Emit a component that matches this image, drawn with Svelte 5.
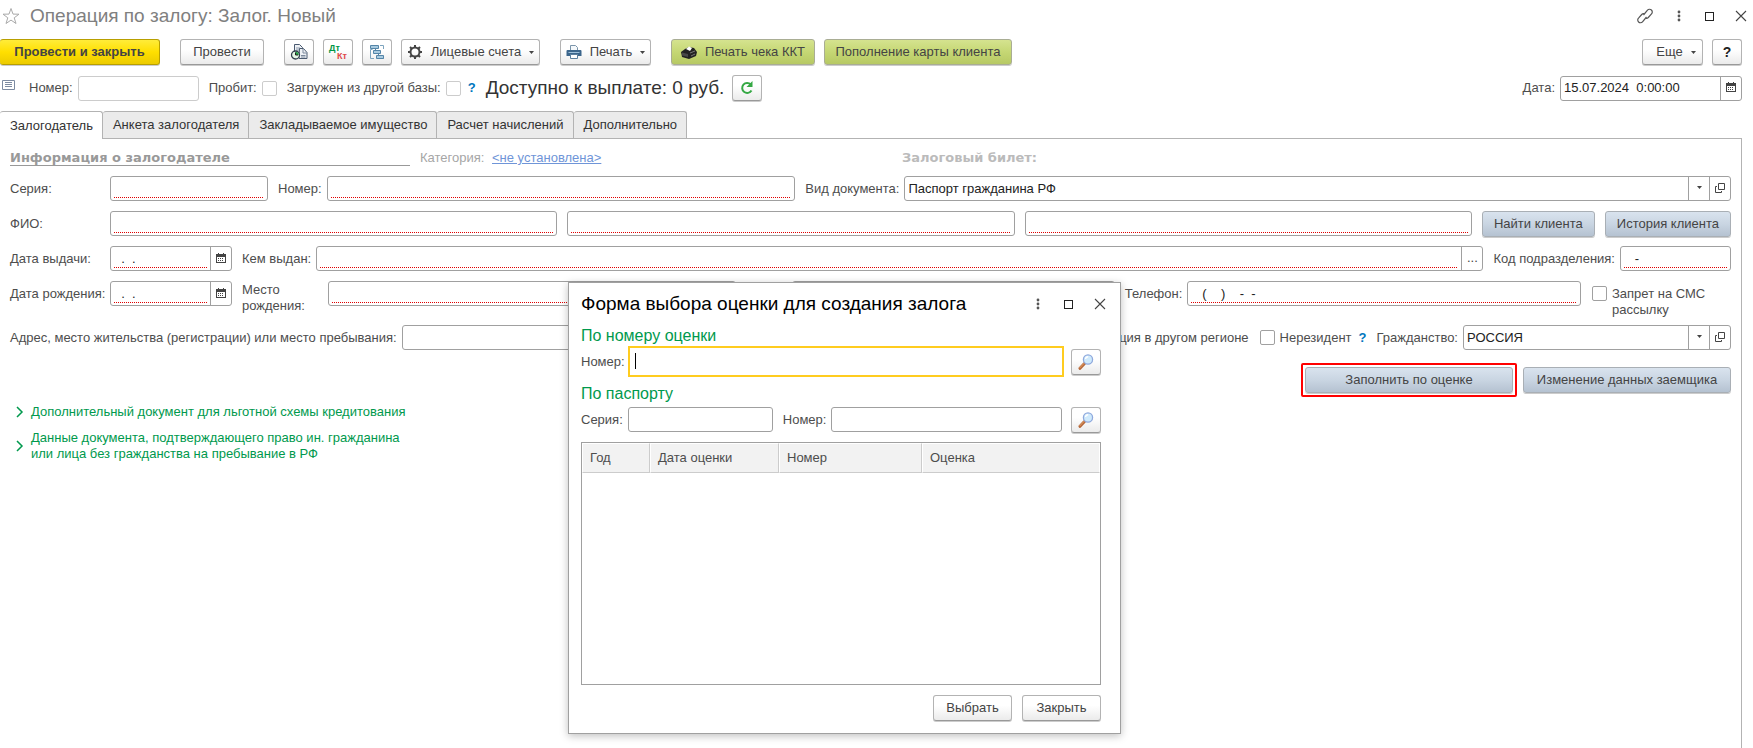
<script>
  const tabs = [
    'Залогодатель',
    'Анкета залогодателя',
    'Закладываемое имущество',
    'Расчет начислений',
    'Дополнительно'
  ];
  const columns = ['Год', 'Дата оценки', 'Номер', 'Оценка'];

  let activeTab = $state(0);
</script>

{#snippet calendar()}
  <svg width="10" height="10" viewBox="0 0 10 10" aria-hidden="true">
    <path d="M0 1h10v9H0z" fill="#444" />
    <path d="M1 4h8v5H1z" fill="#fff" />
    <path d="M2.500 0v2M7.500 0v2" stroke="#444" />
    <path d="M2 5.500h1m1 0h1m1 0h1M2 7.500h1m1 0h1m1 0h1" stroke="#444" />
  </svg>
{/snippet}

{#snippet arrow()}
  <svg class="arrow" width="5" height="3" viewBox="0 0 5 3" aria-hidden="true">
    <path d="M0 0h5L2.500 3z" fill="#444" />
  </svg>
{/snippet}

{#snippet openIcon()}
  <svg width="10" height="10" viewBox="0 0 10 10" fill="none" stroke="#444" aria-hidden="true">
    <path d="M3.500.5h6v6h-6zM2 3.500H.5v6h6V8" />
  </svg>
{/snippet}

{#snippet windowIcons(withLink)}
  {#if withLink}
    <button class="plain" aria-label="Ссылка">
      <svg width="16" height="16" viewBox="0 0 16 16" fill="none" stroke="#555" stroke-width="1.200">
        <path d="M6.500 7 10.500 2.200a2.700 2.700 0 0 1 3.900-.2 2.700 2.700 0 0 1 .1 3.900L11.300 9.500a2.700 2.700 0 0 1-2.300.8" />
        <path d="M9.500 9 5.500 13.800a2.700 2.700 0 0 1-3.900.2 2.700 2.700 0 0 1-.1-3.900L4.700 6.500A2.700 2.700 0 0 1 7 5.700" />
      </svg>
    </button>
  {/if}
  <button class="plain" aria-label="Меню">
    <svg width="12" height="12" viewBox="0 0 12 12" fill="#555">
      <circle cx="6" cy="2" r="1.400" /><circle cx="6" cy="6" r="1.400" /><circle cx="6" cy="10" r="1.400" />
    </svg>
  </button>
  <button class="plain" aria-label="Развернуть">
    <svg width="10" height="10" viewBox="0 0 10 10" fill="none" stroke="#222" shape-rendering="crispEdges">
      <path d="M.5 1.500h8v8h-8z" />
    </svg>
  </button>
  <button class="plain" aria-label="Закрыть окно">
    <svg width="12" height="12" viewBox="0 0 12 12" fill="none" stroke="#444" stroke-width="1.100">
      <path d="M1 1l10 10M11 1 1 11" />
    </svg>
  </button>
{/snippet}

{#snippet searchIcon()}
  <svg width="16" height="16" viewBox="0 0 16 16" aria-hidden="true">
    <path d="M2 14.300 6.500 9.500" stroke="#b5683c" stroke-width="3" stroke-linecap="round" />
    <path d="M1.800 13.800 6 9.400" stroke="#e8a568" stroke-width="1" stroke-linecap="round" />
    <circle cx="10" cy="5.500" r="4.600" fill="#cfeafc" stroke="#8fa9dd" stroke-width="1.300" />
    <path d="M7.500 5a2.700 2.700 0 0 1 2.700-2.300" fill="none" stroke="#fff" stroke-width="1.400" />
  </svg>
{/snippet}

<div class="page">
  <header class="title-bar">
    <svg width="18" height="18" viewBox="0 0 18 18" fill="none" stroke="#aaa" aria-hidden="true">
      <path d="M9 1.500l2 5.600 6 .1-4.800 3.600 1.800 5.700-5-3.400-5 3.400 1.800-5.700L1 7.200l6-.1z" />
    </svg>
    <h1>Операция по залогу: Залог. Новый</h1>
    <div class="window-icons">{@render windowIcons(true)}</div>
  </header>

  <div class="toolbar">
    <button class="btn primary">Провести и закрыть</button>
    <button class="btn post">Провести</button>
    <div class="group">
      <button class="btn icon" aria-label="Отчеты">
        <svg width="18" height="18" viewBox="0 0 18 18">
          <path d="M4.500 1.500h5l3 3v8h-8z" fill="#eef1f5" stroke="#4a5a70" />
          <path d="M6 5h4M6 7h3" stroke="#8e9bad" />
          <path d="M9.500 5.500h4l3.500 4v6H9z" fill="#eef1f5" stroke="#4a5a70" />
          <path d="M13 6v4h4M11 12.500h4.500M11 14h4.500" stroke="#7c8a9d" fill="none" />
          <circle cx="5.500" cy="12" r="4" fill="#e6f7e8" stroke="#333f4f" stroke-width="1.300" />
          <path d="M5.500 12V8.800A3.200 3.200 0 0 1 8.700 12z" fill="#27a348" />
          <path d="M5.500 9.500V12H8" stroke="#222" fill="none" />
        </svg>
      </button>
      <button class="btn icon" aria-label="Движения документа">
        <span class="dtkt"><b class="dt">Дт</b><b class="kt">Кт</b></span>
      </button>
      <button class="btn icon" aria-label="Структура подчиненности">
        <svg width="16" height="16" viewBox="0 0 16 16" fill="none" stroke="#5485a8">
          <path d="M3.500 5.500h-2v9H5M11 1.500h3.500V5M12 14.500h2.500V12" stroke="#7da4be" />
          <path d="M1.500 1.500h8v3h-8zM4.500 6.500h7v3h-7zM7.500 11.500h7v3h-7z" fill="#a9cbe0" />
          <path d="M6.500 4.500v2M9.500 9.500v2" />
        </svg>
      </button>
      <button class="btn accounts">
        <svg width="16" height="16" viewBox="0 0 16 16" fill="none" stroke="#444">
          <circle cx="8" cy="8" r="4.500" stroke-width="2" />
          <path d="M8 1v2.500M8 12.500V15M1 8h2.500M12.500 8H15M3 3l2 2M11 11l2 2M13 3l-2 2M5 11l-2 2" stroke-width="2" />
        </svg>
        Лицевые счета {@render arrow()}
      </button>
    </div>
    <button class="btn print">
      <svg width="16" height="16" viewBox="0 0 16 16">
        <path d="M4.500 6V1.500h5l2 2V6" fill="#f4f8fb" stroke="#7a94aa" />
        <path d="M1.500 6h13a1 1 0 0 1 1 1v5H.5V7a1 1 0 0 1 1-1z" fill="#3c668c" />
        <path d="M2.500 8.500h11" stroke="#9ec0da" />
        <path d="M4.500 10.500h7v4h-7z" fill="#fff" stroke="#5b7f9e" />
      </svg>
      Печать {@render arrow()}
    </button>
    <div class="group">
      <button class="btn green kkt">
        <svg width="16" height="13" viewBox="0 0 16 13">
          <path d="M0 6l4-3 4-2 5 1 3 4-1 4-7 3-7-2z" fill="#222" />
          <path d="M5 3l3-2.500L11 2 9 5z" fill="#fff" />
          <path d="M1 6.500l6 1.500v3l-6-1.500z" fill="#484848" />
          <path d="M9 7l5-2M10 10l4-2" stroke="#777" />
        </svg>
        Печать чека ККТ
      </button>
      <button class="btn green">Пополнение карты клиента</button>
    </div>
    <div class="group right">
      <button class="btn more">Еще {@render arrow()}</button>
      <button class="btn icon help">?</button>
    </div>
  </div>

  <div class="summary">
    <svg class="note" width="13" height="10" viewBox="0 0 13 10" fill="none" stroke="#7d8ba1" aria-hidden="true">
      <path d="M.5.5h12v9H.5zM3 2.500h7M3 4.500h7M3 6.500h7" />
    </svg>
    <label for="number">Номер:</label>
    <div class="box light number"><input id="number" /></div>
    <label class="next" for="probit">Пробит:</label>
    <input id="probit" class="light" type="checkbox" />
    <label class="next" for="loaded">Загружен из другой базы:</label>
    <input id="loaded" class="light" type="checkbox" />
    <a class="hint" href="#loaded">?</a>
    <span class="payout">Доступно к выплате: 0 руб.</span>
    <button class="btn icon" aria-label="Обновить">
      <svg width="14" height="14" viewBox="0 0 14 14">
        <path d="M11.500 9.500a5 5 0 1 1-.7-6" fill="none" stroke="#35a844" stroke-width="2" />
        <path d="M12.500 0v6h-6z" fill="#35a844" />
      </svg>
    </button>
    <label class="date-label" for="date">Дата:</label>
    <div class="box date">
      <input id="date" value="15.07.2024  0:00:00" />
      <button class="addon" aria-label="Выбрать дату">{@render calendar()}</button>
    </div>
  </div>

  <div class="tabs" role="tablist">
    {#each tabs as tab, i}
      <button role="tab" class:active={activeTab === i} aria-selected={activeTab === i} onclick={() => (activeTab = i)}>
        {tab}
      </button>
    {/each}
  </div>

  <main class="panel">
    <div class="row info">
      <h2>Информация о залогодателе</h2>
      <span class="category">Категория: <a href="#category">&lt;не установлена&gt;</a></span>
      <strong>Залоговый билет:</strong>
    </div>

    <div class="row">
      <label class="first" for="series">Серия:</label>
      <div class="box required series"><input id="series" /></div>
      <label class="next" for="doc-number">Номер:</label>
      <div class="box required doc-number"><input id="doc-number" /></div>
      <label class="next" for="doc-kind">Вид документа:</label>
      <div class="box doc-kind">
        <select id="doc-kind"><option>Паспорт гражданина РФ</option></select>
        <span class="addon">{@render arrow()}</span>
        <button class="addon" aria-label="Открыть документ">{@render openIcon()}</button>
      </div>
    </div>

    <div class="row names">
      <label class="first" for="surname">ФИО:</label>
      <div class="box required grow"><input id="surname" /></div>
      <div class="box required grow"><input aria-label="Имя" /></div>
      <div class="box required grow"><input aria-label="Отчество" /></div>
      <button class="btn blue">Найти клиента</button>
      <button class="btn blue">История клиента</button>
    </div>

    <div class="row">
      <label class="first" for="issued">Дата выдачи:</label>
      <div class="box required with-addon day">
        <input id="issued" value="  .  ." />
        <button class="addon" aria-label="Выбрать дату выдачи">{@render calendar()}</button>
      </div>
      <label class="next" for="issuer">Кем выдан:</label>
      <div class="box required with-addon grow">
        <input id="issuer" />
        <button class="addon" aria-label="Выбрать">...</button>
      </div>
      <label class="next" for="code">Код подразделения:</label>
      <div class="box required code"><input id="code" value="   -" /></div>
    </div>

    <div class="row tall">
      <label class="first" for="birth">Дата рождения:</label>
      <div class="box required with-addon day">
        <input id="birth" value="  .  ." />
        <button class="addon" aria-label="Выбрать дату рождения">{@render calendar()}</button>
      </div>
      <label class="next place-label" for="place">Место рождения:</label>
      <div class="box required place"><input id="place" /></div>
      <div class="box extra"><input aria-label="Дополнительно" /></div>
      <label class="next" for="phone">Телефон:</label>
      <div class="box required phone"><input id="phone" value="   (    )    -  -" /></div>
      <input id="sms" class="next" type="checkbox" />
      <label class="sms-label" for="sms">Запрет на СМС рассылку</label>
    </div>

    <div class="row">
      <label for="address">Адрес, место жительства (регистрации) или место пребывания:</label>
      <div class="box grow"><input id="address" /></div>
      <input id="region" class="next" type="checkbox" />
      <label for="region">Регистрация в другом регионе</label>
      <input id="nonresident" class="next" type="checkbox" />
      <label for="nonresident">Нерезидент</label>
      <a class="hint" href="#nonresident">?</a>
      <label class="next" for="citizen">Гражданство:</label>
      <div class="box citizen">
        <select id="citizen"><option>РОССИЯ</option></select>
        <span class="addon">{@render arrow()}</span>
        <button class="addon" aria-label="Открыть страну">{@render openIcon()}</button>
      </div>
    </div>

    <div class="actions">
      <div class="marked"><button class="btn blue">Заполнить по оценке</button></div>
      <button class="btn blue">Изменение данных заемщика</button>
    </div>

    <div class="sections">
      <button class="section">
        <svg width="8" height="12" viewBox="0 0 8 12" fill="none" stroke="#00994d" stroke-width="1.500"><path d="M1 1l5 5-5 5" /></svg>
        <span>Дополнительный документ для льготной схемы кредитования</span>
      </button>
      <button class="section">
        <svg width="8" height="12" viewBox="0 0 8 12" fill="none" stroke="#00994d" stroke-width="1.500"><path d="M1 1l5 5-5 5" /></svg>
        <span>Данные документа, подтверждающего право ин. гражданина или лица без гражданства на пребывание в РФ</span>
      </button>
    </div>
  </main>

  <div class="dialog" role="dialog" aria-labelledby="dialog-title">
    <div class="dialog-head">
      <h2 id="dialog-title">Форма выбора оценки для создания залога</h2>
      <div class="window-icons">{@render windowIcons(false)}</div>
    </div>

    <h3>По номеру оценки</h3>
    <div class="row search first-search">
      <label for="estimate">Номер:</label>
      <div class="box focused grow"><input id="estimate" /><span class="caret"></span></div>
      <button class="btn icon" aria-label="Найти по номеру">{@render searchIcon()}</button>
    </div>

    <h3>По паспорту</h3>
    <div class="row search">
      <label for="p-series">Серия:</label>
      <div class="box p-series"><input id="p-series" /></div>
      <label class="next" for="p-number">Номер:</label>
      <div class="box grow"><input id="p-number" /></div>
      <button class="btn icon" aria-label="Найти по паспорту">{@render searchIcon()}</button>
    </div>

    <div class="grid">
      <table>
        <thead>
          <tr>
            {#each columns as column}
              <th>{column}</th>
            {/each}
          </tr>
        </thead>
      </table>
    </div>

    <div class="dialog-foot">
      <button class="btn">Выбрать</button>
      <button class="btn">Закрыть</button>
    </div>
  </div>
</div>

<style>
  :global(body) {
    background: #fff;
  }

  .page {
    position: relative;
    box-sizing: border-box;
    min-height: 100vh;
    display: flex;
    flex-direction: column;
    overflow: hidden;
    padding-right: 11px;
    font-family: 'Liberation Sans', Arial, sans-serif;
    font-size: 13px;
    line-height: 16px;
    color: #4d4d4d;
  }

  h1,
  h2,
  h3 {
    margin: 0;
    font-weight: 400;
  }

  button,
  input,
  select {
    font: inherit;
    color: inherit;
    margin: 0;
  }

  label {
    flex: none;
  }

  svg {
    flex: none;
    display: block;
  }

  .title-bar {
    display: flex;
    align-items: center;
    gap: 10px;
    height: 32px;
    padding-left: 2px;
    margin-bottom: 7px;
  }

  h1 {
    font-size: 19px;
    line-height: 24px;
    color: #808080;
  }

  .window-icons {
    display: flex;
    align-items: center;
    gap: 20px;
    margin-left: auto;
  }

  .title-bar .window-icons {
    margin-right: -5px;
  }

  .plain {
    padding: 0;
    border: 0;
    background: none;
  }

  .toolbar {
    display: flex;
    gap: 20px;
  }

  .group {
    display: flex;
    gap: 9px;
  }

  .right {
    margin-left: auto;
  }

  .btn {
    box-sizing: border-box;
    display: flex;
    align-items: center;
    justify-content: center;
    gap: 8px;
    height: 26px;
    padding: 0 13px;
    border: 1px solid #b3b3b3;
    border-bottom-color: #999;
    border-radius: 3px;
    background: linear-gradient(#fff 40%, #ebebeb);
    box-shadow: 0 1px 0 #ccc;
    color: #444;
    white-space: nowrap;
  }

  .btn.icon {
    flex: none;
    width: 30px;
    padding: 0;
  }

  .primary {
    width: 160px;
    border-color: #b89f00;
    border-left: 0;
    background: linear-gradient(#ffec3a, #ffdf00 50%, #eccb00);
    font-weight: 700;
  }

  .post {
    width: 84px;
  }

  .accounts {
    width: 139px;
    padding: 0 6px;
  }

  .print {
    width: 91px;
    padding: 0 6px;
  }

  .green {
    background: linear-gradient(#d5e38f, #c5d774 50%, #b7c964);
    border-color: #a9ad94;
  }

  .kkt {
    width: 144px;
    padding: 0 6px;
  }

  .green:not(.kkt) {
    width: 188px;
  }

  .blue {
    padding: 0 11px;
    background: linear-gradient(#d9e3ee, #c9d5e2 50%, #b5c2d1);
    border-color: #a9afb5;
  }

  .more {
    width: 61px;
    padding: 0 6px 0 13px;
  }

  .help {
    font-size: 14px;
    font-weight: 700;
    color: #222;
  }

  .dtkt {
    display: grid;
    width: 18px;
    font-size: 9px;
    line-height: 8px;
  }

  .dt {
    color: #009646;
    text-align: left;
  }

  .kt {
    color: #e04848;
    text-align: right;
  }

  .summary {
    display: flex;
    align-items: center;
    gap: 5px;
    margin: 10px 0;
  }

  .note {
    align-self: flex-start;
    margin: 5px 9px 0 2px;
  }

  .next {
    margin-left: 5px;
  }

  .payout {
    margin: 0 3px 0 5px;
    font-size: 19px;
    line-height: 24px;
    color: #333;
  }

  .date-label {
    margin-left: auto;
  }

  .box {
    position: relative;
    box-sizing: border-box;
    display: flex;
    height: 25px;
    min-width: 0;
    border: 1px solid #a0a0a0;
    border-radius: 3px;
    background: #fff;
    color: #222;
  }

  .box.light {
    border-color: #ccc;
  }

  .box input,
  .box select {
    flex: 1;
    width: 0;
    min-width: 0;
    padding: 0 3px;
    border: 0;
    outline: 0;
    background: none;
    appearance: none;
  }

  .box.required::after {
    content: '';
    position: absolute;
    left: 3px;
    right: 3px;
    bottom: 2px;
    height: 1px;
    background: repeating-linear-gradient(90deg, #e00000 0 1px, transparent 1px 2px);
  }

  .box.with-addon::after {
    right: 24px;
  }

  .addon {
    flex: none;
    box-sizing: border-box;
    display: flex;
    align-items: center;
    justify-content: center;
    width: 21px;
    padding: 0 0 2px;
    border: 0;
    border-left: 1px solid #a0a0a0;
    background: none;
    color: #444;
  }

  input[type='checkbox'] {
    flex: none;
    box-sizing: border-box;
    width: 15px;
    height: 15px;
    border: 1px solid #a0a0a0;
    border-radius: 2px;
    background: #fff;
    appearance: none;
  }

  input[type='checkbox'].light {
    border-color: #ccc;
  }

  input[type='checkbox'].next {
    margin-left: 6px;
  }

  .hint {
    margin-left: 2px;
    color: #0076be;
    font-weight: 700;
    text-decoration: none;
  }

  .number {
    width: 121px;
  }

  .date {
    width: 182px;
  }

  .tabs {
    display: flex;
    height: 28px;
  }

  .tabs button {
    position: relative;
    padding: 0 9px 0 10px;
    margin-bottom: 1px;
    border: 1px solid #b3b3b3;
    border-bottom: 0;
    border-left-width: 0;
    border-radius: 3px 3px 0 0;
    background: #ebebeb;
    color: #333;
    white-space: nowrap;
  }

  .tabs .active {
    margin-bottom: 0;
    background: #fff;
    z-index: 1;
  }

  .panel {
    flex: 1;
    display: flex;
    flex-direction: column;
    gap: 10px;
    margin-top: -1px;
    padding: 11px 10px 10px;
    border: 1px solid #b3b3b3;
    border-width: 1px 1px 0 0;
  }

  .row {
    display: flex;
    align-items: center;
    gap: 5px;
    min-height: 25px;
  }

  .info {
    min-height: 16px;
    gap: 10px;
  }

  .info h2 {
    box-sizing: border-box;
    width: 400px;
    border-bottom: 1px solid #999;
    font-size: 13px;
    line-height: 15px;
    font-weight: 700;
    font-family: 'DejaVu Sans', Verdana, sans-serif;
    color: #999;
  }

  .category {
    flex: 0 0 472px;
    color: #a6a6a6;
  }

  .category a {
    margin-left: 4px;
    color: #6f95d8;
  }

  .info strong {
    color: #bbb;
    font-family: 'DejaVu Sans', Verdana, sans-serif;
  }

  .first {
    width: 95px;
    white-space: nowrap;
  }

  .grow {
    flex: 1;
  }

  .series {
    width: 158px;
  }

  .doc-number {
    flex: 468;
  }

  .doc-kind {
    flex: 827;
  }

  .names {
    gap: 10px;
    height: 25px;
  }

  .names .first {
    width: 90px;
  }

  .day {
    width: 122px;
  }

  .code {
    width: 111px;
  }

  .tall {
    align-items: flex-start;
    height: 34px;
  }

  .tall label {
    padding-top: 5px;
  }

  .tall .place-label {
    width: 81px;
    padding-top: 1px;
  }

  .place {
    flex: 409;
  }

  .extra {
    flex: 324;
    margin-left: 51px;
  }

  .phone {
    flex: 395;
  }

  .tall input[type='checkbox'] {
    margin-top: 5px;
  }

  .sms-label {
    width: 119px;
  }

  .citizen {
    width: 268px;
  }

  .actions {
    display: flex;
    justify-content: flex-end;
    align-items: center;
    gap: 6px;
    margin-top: 3px;
  }

  .actions .btn {
    width: 208px;
  }

  .marked {
    padding: 2px;
    border: 2px solid #f00;
    border-radius: 2px;
  }

  .sections {
    display: grid;
    justify-content: start;
    gap: 10px;
    margin-top: -3px;
  }

  .section {
    display: flex;
    align-items: center;
    gap: 7px;
    padding: 0 0 0 6px;
    border: 0;
    background: none;
    color: #00994d;
    text-align: left;
  }

  .section span {
    max-width: 390px;
  }

  .dialog {
    position: absolute;
    left: 568px;
    top: 282px;
    z-index: 2;
    box-sizing: border-box;
    width: 553px;
    padding: 9px 19px 12px 12px;
    border: 1px solid #a0a0a0;
    background: #fff;
    box-shadow: 0 2px 8px rgba(0, 0, 0, 0.25);
  }

  .dialog-head {
    display: flex;
    align-items: center;
    height: 24px;
    margin-bottom: 10px;
  }

  .dialog-head .window-icons {
    margin-right: -5px;
  }

  .dialog h2 {
    font-size: 19px;
    line-height: 24px;
    color: #000;
  }

  h3 {
    font-size: 16px;
    line-height: 20px;
    color: #00994d;
  }

  .first-search {
    margin-bottom: 7px;
  }

  .search {
    min-height: 31px;
  }

  .search .btn {
    margin-left: 4px;
  }

  .search .focused {
    height: 31px;
    margin: 0 -2px;
    border: 2px solid #ffcc1f;
    border-radius: 0;
  }

  .caret {
    position: absolute;
    left: 5px;
    top: 5px;
    width: 1px;
    height: 16px;
    background: #000;
  }

  .p-series {
    width: 145px;
  }

  .grid {
    height: 241px;
    margin-top: 7px;
    border: 1px solid #a0a0a0;
  }

  table {
    width: 100%;
    table-layout: fixed;
    border-spacing: 0;
  }

  th {
    height: 28px;
    padding: 0 7px;
    border: 1px solid #fff;
    border-right-color: #ccc;
    border-bottom-color: #ccc;
    background: #f2f2f2;
    font-weight: 400;
    text-align: left;
  }

  th:last-child {
    border-right-color: #fff;
  }

  th:nth-child(1) {
    width: 52px;
  }

  th:nth-child(2) {
    width: 113px;
  }

  th:nth-child(3) {
    width: 127px;
  }

  .dialog-foot {
    display: flex;
    justify-content: flex-end;
    gap: 10px;
    margin-top: 10px;
  }

  .dialog-foot .btn {
    width: 79px;
  }
</style>
